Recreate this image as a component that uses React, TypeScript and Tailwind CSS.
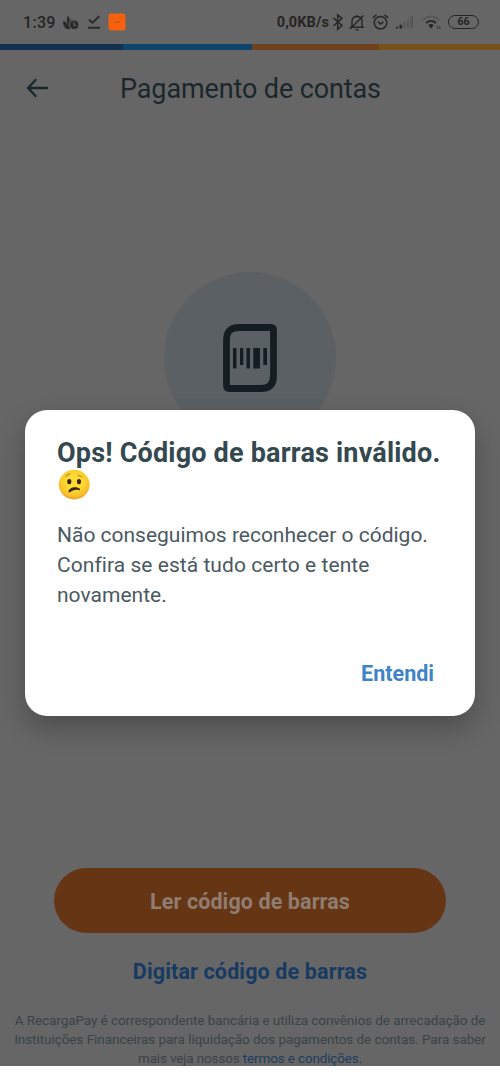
import type { ReactNode } from 'react';

function StatusBar() {
  return (
    <div className="flex h-11 items-center pl-[23px] pr-[21px] text-[#252525]">
      <span className="w-[39px] whitespace-nowrap pt-[2px] text-[16px] font-medium tracking-[0.3px]">1:39</span>
      <svg width="18" height="16" viewBox="0 0 18 16" className="mt-px">
        <path d="M1 6C3 6 5 8 6 10C5 6 4 4 6 1C8 2 8 4 7 7L10 4C11 6 10 7 8 8V14C4 15 1 12 1 6Z" fill="#2b2b2b" />
        <circle cx="12.2" cy="9.8" r="4.8" fill="#2b2b2b" stroke="#666" strokeWidth="1" />
        <path d="M12 7.2V10.2H14.3" fill="none" stroke="#666" strokeWidth="1.1" />
      </svg>
      <svg width="14" height="16" viewBox="0 0 14 16" className="ml-[7px]" fill="none" stroke="#2b2b2b" strokeWidth="1.9">
        <path d="M2 5.5L5.5 9L12.3 2M1 13.8H13" />
      </svg>
      <svg width="18" height="18" viewBox="0 0 18 18" className="ml-[7px]">
        <rect x="0.5" y="0.5" width="17" height="17" rx="3" fill="#f7600c" />
        <path d="M4 7V5.8Q4 4.8 5 4.8H6.3M11.7 4.8H13Q14 4.8 14 5.8V7" fill="none" stroke="#dd5b14" strokeWidth="0.9" />
        <path d="M6 10L7.3 8.3L8.4 10M9.6 10L10.7 8.3L12 10" fill="none" stroke="#b4501e" strokeWidth="0.9" />
      </svg>
      <div className="ml-auto flex items-center">
        <span className="whitespace-nowrap pt-[2px] text-[14.5px] font-bold tracking-[0.1px]">0,0KB/s</span>
        <svg width="12" height="18" viewBox="0 0 12 18" className="ml-[3px]" fill="none" stroke="#252525" strokeWidth="1.5">
          <path d="M1.5 5L10 12.5L5.7 16.2V1.8L10 5.3L1.5 13" />
        </svg>
        <svg width="16" height="17" viewBox="0 0 16 17" className="ml-[5px]" fill="none" stroke="#252525" strokeWidth="1.4">
          <path d="M3 13V7C3 4 5 2.5 8 2.5S13 4 13 7V13M1 13.3H15M1 15L14.5 1.5M6.5 15.7H9.5M8 1V3" />
        </svg>
        <svg width="17" height="18" viewBox="0 0 17 18" className="ml-[7px]" fill="none" stroke="#252525" strokeWidth="1.5">
          <circle cx="8.5" cy="9.7" r="6.3" />
          <path d="M0.8 5L4.5 1.7M16.2 5L12.5 1.7M5.8 8.5L8.5 11L11.5 8.8" />
        </svg>
        <svg width="19" height="15" viewBox="0 0 19 15" className="ml-[6px] mr-px">
          <path d="M0 13.5L3 11V13.5ZM4.5 9.8H7V13.5H4.5Z" fill="#252525" />
          <path d="M8.5 7H10.5V13.5H8.5ZM12 4.5H14V13.5H12ZM15.5 1.5H18V13.5H15.5Z" fill="#555" />
        </svg>
        <svg width="19" height="15" viewBox="0 0 19 15" className="ml-[7px] mt-px" fill="none">
          <path d="M0.8 4.8Q9 -2 17.2 4.8" stroke="#555" strokeWidth="1.8" />
          <path d="M4 8Q9 3.7 14 8" stroke="#252525" strokeWidth="1.8" />
          <path d="M6.3 10.2Q9 8 11.7 10.2L9 13.5Z" fill="#252525" />
          <path d="M15.5 14V11M17.8 11V14" stroke="#3c3c3c" strokeWidth="1.2" />
        </svg>
        <span className="ml-[7px] flex h-[14px] w-[31px] items-center justify-center rounded-full border-[1.5px] border-[#252525] pt-px text-[10.5px] font-bold leading-none">66</span>
      </div>
    </div>
  );
}

function BrandStripe() {
  return (
    <div className="flex h-[6px] w-full">
      <div className="w-[123px] bg-[#14304f]" />
      <div className="w-[129px] bg-[#0f456c]" />
      <div className="w-[127px] bg-[#70411f]" />
      <div className="flex-1 bg-[#745218]" />
    </div>
  );
}

function BarcodeBadge() {
  return (
    <div className="mx-auto mt-[145px] flex h-[172px] w-[172px] items-center justify-center rounded-full bg-[#5b6064]">
      <svg width="54" height="68" viewBox="0 0 54 68">
        <path d="M16 3.5H47.5Q50.5 3.5 50.5 6.5V52Q50.5 64.5 38 64.5H6.5Q3.5 64.5 3.5 61.5V16Q3.5 3.5 16 3.5Z" fill="none" stroke="#141d21" strokeWidth="6.8" />
        <path d="M10 24H13.5V44.5H10ZM17 24H20.3V41H17ZM23.5 24H27V44.5H23.5ZM30.3 24H37V44.5H30.3ZM40.3 24H44V41H40.3Z" fill="#141d21" />
      </svg>
    </div>
  );
}

function WorriedFace() {
  return (
    <svg width="32" height="31" viewBox="0 0 32 31">
      <defs>
        <radialGradient id="face" cx="50%" cy="40%" r="60%">
          <stop offset="0.45" stopColor="#fddb32" />
          <stop offset="0.85" stopColor="#f9bd2a" />
          <stop offset="1" stopColor="#ee9b24" />
        </radialGradient>
      </defs>
      <ellipse cx="16.2" cy="15.6" rx="15.4" ry="14.8" fill="url(#face)" />
      <ellipse cx="11.3" cy="12.6" rx="2.1" ry="2.7" fill="#35230f" />
      <ellipse cx="21" cy="12.6" rx="2.1" ry="2.7" fill="#35230f" />
      <path d="M8 7.3Q9.5 5 12 4.8M20 6Q21.5 7.5 24 7.6" fill="none" stroke="#d58d20" strokeWidth="1.3" strokeLinecap="round" />
      <path d="M10.5 22.3C11.5 18 19 16.8 22 20Q22.6 21.3 21 21.2C17.5 20.2 14.5 21.5 11.8 23.2Q10 23.8 10.5 22.3Z" fill="#35230f" />
    </svg>
  );
}

function Line({ className, children }: { className: string; children: ReactNode }) {
  return <span className={`block whitespace-nowrap ${className}`}>{children}</span>;
}

function ErrorDialog() {
  return (
    <div role="dialog" className="absolute left-[25px] top-[410px] flex h-[306px] w-[450px] flex-col rounded-[22px] bg-white px-[33px] pt-[27px] shadow-[0_12px_28px_0_rgba(0,0,0,0.25)]">
      <h2 className="-ml-px whitespace-nowrap text-[27px] font-bold leading-8 tracking-[0.19px] text-[#344850]">Ops! Código de barras inválido.</h2>
      <WorriedFace />
      <p className="-ml-px mt-[20px] text-[21px] leading-[30px] text-[#4a595f]">
        <Line className="tracking-[-0.01px]">Não conseguimos reconhecer o código.</Line>
        <Line className="tracking-[0.05px]">Confira se está tudo certo e tente</Line>
        <Line className="tracking-[0.02px]">novamente.</Line>
      </p>
      <button className="mr-[8px] mt-[48px] self-end text-[21.5px] font-bold leading-[32px] text-[#3f83c8]">Entendi</button>
    </div>
  );
}

export default function App() {
  return (
    <div className="h-[1082px] w-[500px] overflow-hidden bg-white font-['Roboto','Liberation_Sans',sans-serif]">
      <main className="relative flex h-[1066px] flex-col overflow-hidden bg-[#666666]">
        <StatusBar />
        <BrandStripe />
        <header className="flex h-[77px] items-center pl-[26px]">
          <svg width="23" height="20" viewBox="0 0 23 20" className="-mt-[2px]" fill="none" stroke="#1b262b" strokeWidth="2.4" strokeLinecap="round" strokeLinejoin="round">
            <path d="M21 10H2M9.5 2L2 10L9.5 18" />
          </svg>
          <h1 className="ml-[71px] whitespace-nowrap text-[27px] leading-8 tracking-[-0.12px] text-[#1c272c]">Pagamento de contas</h1>
        </header>
        <BarcodeBadge />
        <div className="mt-auto flex h-[198px] flex-col items-center">
          <button className="h-[65px] w-[392px] shrink-0 rounded-full bg-[#663614] pt-[3px] text-[21.5px] font-bold tracking-[0.1px] text-[#8f7d71]">Ler código de barras</button>
          <button className="mt-[23px] whitespace-nowrap text-[21.5px] font-bold leading-8 tracking-[0.13px] text-[#173a62]">Digitar código de barras</button>
          <p className="mt-[23px] text-center text-[13.5px] leading-[19px] text-[#3a4347]">
            <Line className="tracking-[-0.07px]">A RecargaPay é correspondente bancária e utiliza convênios de arrecadação de</Line>
            <Line className="tracking-[-0.05px]">Instituições Financeiras para liquidação dos pagamentos de contas. Para saber</Line>
            <Line className="tracking-[-0.15px]">mais veja nossos <a className="text-[#203d60]">termos e condições.</a></Line>
          </p>
        </div>
        <ErrorDialog />
      </main>
    </div>
  );
}
